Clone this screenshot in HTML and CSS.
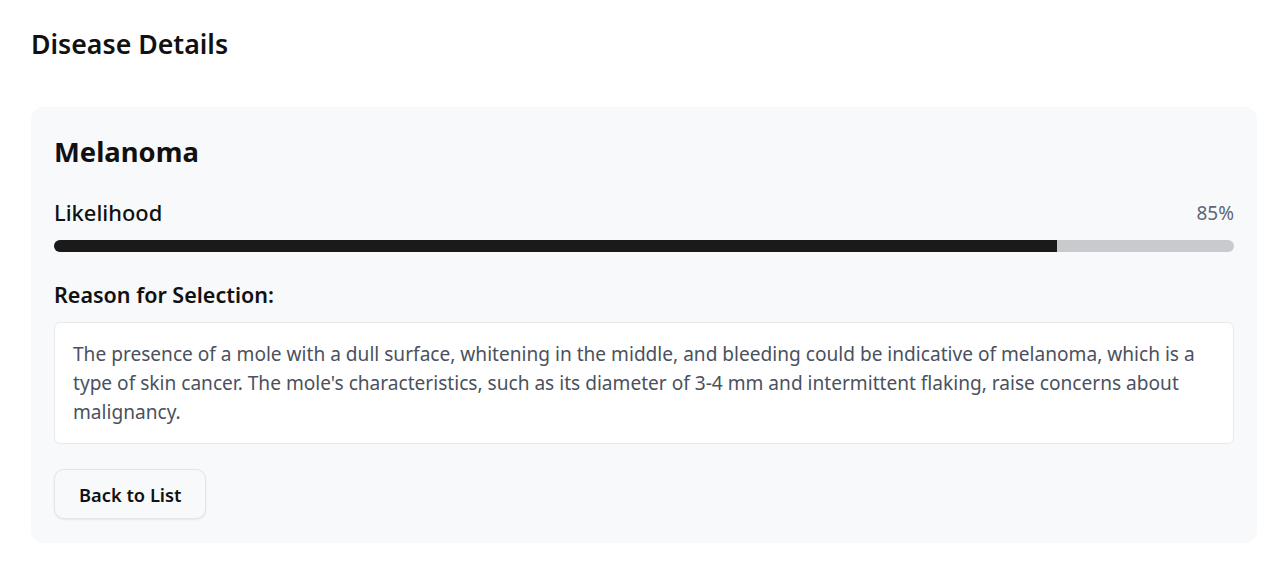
FILE: index.html
```html
<!DOCTYPE html>
<html lang="en">
<head>
<meta charset="utf-8">
<title>Disease Details</title>
<link rel="stylesheet" href="styles.css">
</head>
<body>
<main class="page">
  <h1 class="page-title">Disease Details</h1>
  <section class="card">
    <h2 class="disease-name">Melanoma</h2>
    <div class="likelihood-row">
      <span class="likelihood-label">Likelihood</span>
      <span class="likelihood-value">85%</span>
    </div>
    <div class="bar"><div class="bar-fill" style="width: 85%"></div></div>
    <h3 class="reason-title">Reason for Selection:</h3>
    <div class="reason-box">
      <p class="reason-text">The presence of a mole with a dull surface, whitening in the middle, and bleeding could be indicative of melanoma, which is a type of skin cancer. The mole's characteristics, such as its diameter of 3-4 mm and intermittent flaking, raise concerns about malignancy.</p>
    </div>
    <button class="back-btn" type="button">Back to List</button>
  </section>
</main>
</body>
</html>
```

FILE: styles.css
```css
* { box-sizing: border-box; }
body {
  margin: 0;
  background: #ffffff;
  font-family: "Noto Sans", "Open Sans", sans-serif;
  color: #111111;
}
.page {
  padding: 28px 23px 24px 31px;
}
.page-title {
  margin: 0 0 47px;
  font-size: 26.7px;
  line-height: 32px;
  font-weight: 600;
  color: #111;
}
.card {
  background: #f8f9fb;
  border-radius: 12px;
  padding: 28px 23px 24px 23px;
}
.disease-name {
  margin: 0;
  font-size: 27.4px;
  line-height: 34px;
  font-weight: 700;
}
.likelihood-row {
  margin-top: 30px;
  display: flex;
  justify-content: space-between;
  align-items: center;
  line-height: 28px;
}
.likelihood-label {
  font-size: 21.9px;
  font-weight: 500;
}
.likelihood-value {
  font-size: 19px;
  color: #5f6673;
}
.bar {
  margin-top: 13px;
  height: 12px;
  background: #c9cacd;
  border-radius: 6px;
  overflow: hidden;
}
.bar-fill {
  height: 100%;
  background: #1a1a1a;
}
.reason-title {
  margin: 29px 0 0;
  font-size: 21.5px;
  line-height: 28px;
  font-weight: 600;
}
.reason-box {
  margin-top: 13px;
  background: #ffffff;
  border: 1px solid #e6e8eb;
  border-radius: 6px;
  padding: 17px 20px 16px 18px;
}
.reason-text {
  margin: 0;
  font-size: 19.1px;
  line-height: 29px;
  color: #4a5160;
}
.back-btn {
  margin-top: 25px;
  height: 50px;
  padding: 0 24px;
  font-family: inherit;
  font-size: 18.3px;
  font-weight: 600;
  color: #111;
  background: #f8f9fb;
  border: 1px solid #e3e5e8;
  border-radius: 10px;
  box-shadow: 0 1px 2px rgba(0, 0, 0, 0.08);
}
```
